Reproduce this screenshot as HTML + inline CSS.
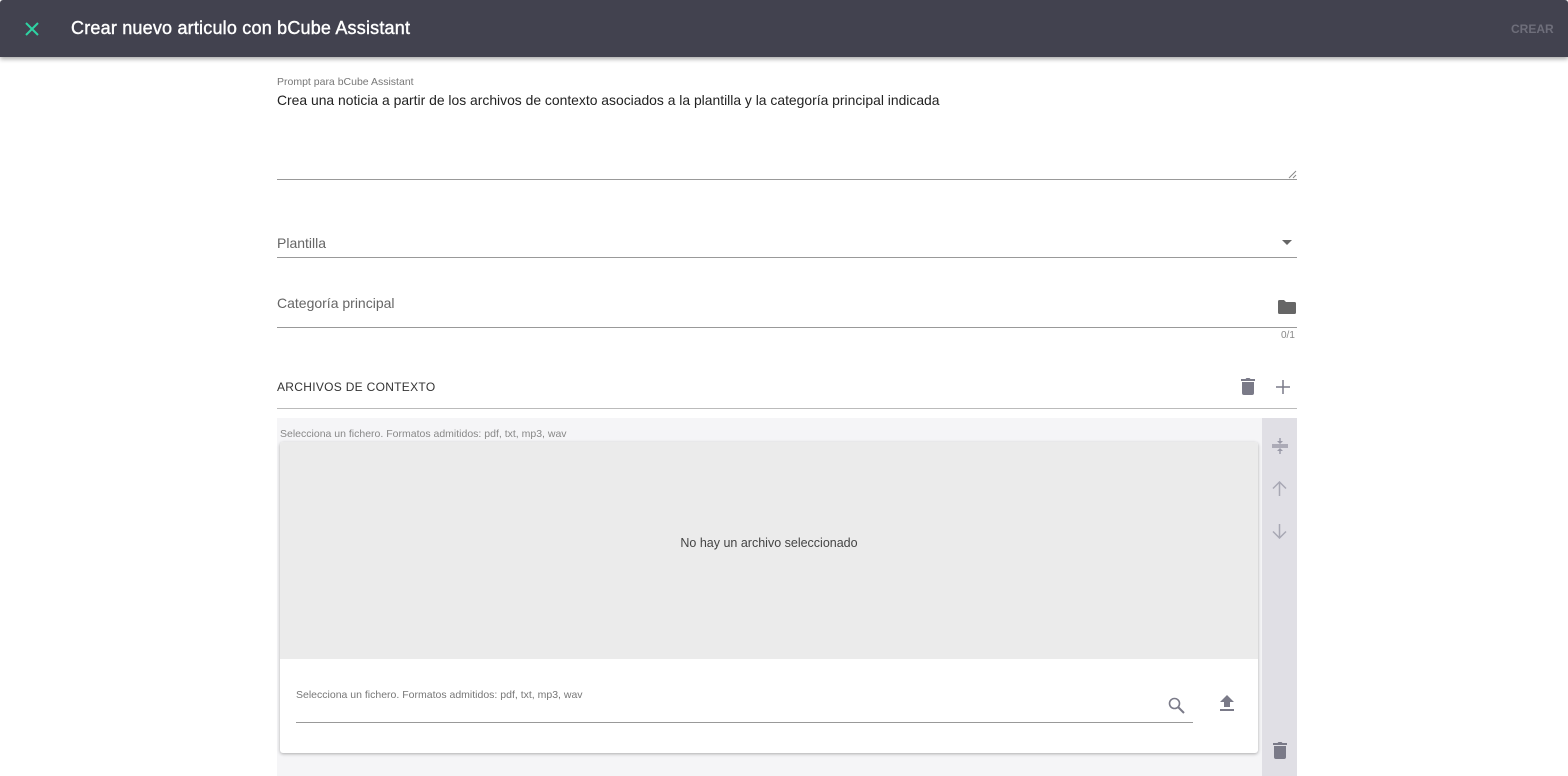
<!DOCTYPE html><html><head><style>
body{margin:0;width:1568px;height:776px;overflow:hidden;background:#fff;font-family:"Liberation Sans",sans-serif;position:relative}
.a{position:absolute}
</style></head><body>
<div class="a" style="left:0;top:0;width:1568px;height:57px;background:#42424f;box-shadow:0 2px 5px rgba(0,0,0,.35);border-radius:3px 3px 0 0"></div>
<svg class="a" style="left:25px;top:22px" width="14" height="14" viewBox="0 0 14 14"><path d="M1 1L13 13M13 1L1 13" stroke="#2ed3a3" stroke-width="2"/></svg>
<div class="a" style="left:71px;top:18px;color:#fff;font-size:18px;letter-spacing:.2px;-webkit-text-stroke:.4px #fff">Crear nuevo articulo con bCube Assistant</div>
<div class="a" style="left:1511px;top:22px;color:#6e6e7a;font-size:12px;font-weight:bold">CREAR</div>

<div class="a" style="left:277px;top:76px;font-size:10.5px;color:#777">Prompt para bCube Assistant</div>
<div class="a" style="left:277px;top:92px;font-size:13.9px;color:#222">Crea una noticia a partir de los archivos de contexto asociados a la plantilla y la categoría principal indicada</div>
<div class="a" style="left:277px;top:179px;width:1020px;height:1px;background:#999"></div>
<svg class="a" style="left:1288px;top:170px" width="9" height="9"><path d="M1 8L8 1M5 8L8 5" stroke="#888"/></svg>

<div class="a" style="left:277px;top:235px;font-size:14px;color:#666">Plantilla</div>
<svg class="a" style="left:1282px;top:240px" width="10" height="5"><path d="M0 0L10 0L5 5Z" fill="#666"/></svg>
<div class="a" style="left:277px;top:257px;width:1020px;height:1px;background:#999"></div>

<div class="a" style="left:277px;top:295px;font-size:14px;color:#666">Categoría principal</div>
<svg class="a" style="left:1278px;top:300px" width="18" height="14" viewBox="0 0 18 14"><path d="M0 1.5Q0 0 1.5 0H6L8 2H16.5Q18 2 18 3.5V12.5Q18 14 16.5 14H1.5Q0 14 0 12.5Z" fill="#666"/></svg>
<div class="a" style="left:277px;top:327px;width:1020px;height:1px;background:#999"></div>
<div class="a" style="left:1281px;top:330px;font-size:10px;color:#888">0/1</div>

<div class="a" style="left:277px;top:380px;font-size:12px;color:#333;letter-spacing:.3px">ARCHIVOS DE CONTEXTO</div>
<svg class="a" style="left:1241px;top:378px" width="14" height="17" viewBox="0 0 14 17"><path d="M1 4H13V15Q13 17 11 17H3Q1 17 1 15ZM0 1H4.5L5.5 0H8.5L9.5 1H14V3H0Z" fill="#7a7a88"/></svg>
<svg class="a" style="left:1276px;top:380px" width="14" height="14"><path d="M7 0V14M0 7H14" stroke="#7a7a88" stroke-width="1.5"/></svg>
<div class="a" style="left:277px;top:408px;width:1020px;height:1px;background:#bbb"></div>

<div class="a" style="left:277px;top:418px;width:985px;height:358px;background:#f5f5f7"></div>
<div class="a" style="left:1262px;top:418px;width:35px;height:358px;background:#e0dfe5"></div>
<div class="a" style="left:280px;top:428px;font-size:10.5px;color:#888">Selecciona un fichero. Formatos admitidos: pdf, txt, mp3, wav</div>
<div class="a" style="left:280px;top:442px;width:978px;height:311px;background:#fff;box-shadow:0 1px 3px rgba(0,0,0,.3);border-radius:3px"></div>
<div class="a" style="left:280px;top:442px;width:978px;height:217px;background:#ebebeb;border-radius:3px 3px 0 0"></div>
<div class="a" style="left:280px;top:536px;width:978px;text-align:center;font-size:12.5px;color:#444">No hay un archivo seleccionado</div>
<div class="a" style="left:296px;top:689px;font-size:10.5px;color:#777">Selecciona un fichero. Formatos admitidos: pdf, txt, mp3, wav</div>
<div class="a" style="left:296px;top:722px;width:897px;height:1px;background:#999"></div>
<svg class="a" style="left:1168px;top:697px" width="17" height="17" viewBox="0 0 17 17"><circle cx="6.5" cy="6.5" r="5" fill="none" stroke="#7a7a88" stroke-width="1.6"/><path d="M10 10L16 16" stroke="#7a7a88" stroke-width="2"/></svg>
<svg class="a" style="left:1220px;top:695px" width="14" height="16" viewBox="0 0 14 16"><path d="M7 0L14 7H10V12H4V7H0ZM0 14H14V16H0Z" fill="#7a7a88"/></svg>

<svg class="a" style="left:1272px;top:437px" width="16" height="18" viewBox="0 0 16 18"><path d="M0 8H16M0 10H16M8 1V6M8 12V17" stroke="#9a9aa8" stroke-width="1.4"/><path d="M5 4L8 7L11 4M5 14L8 11L11 14" fill="#9a9aa8"/></svg>
<svg class="a" style="left:1272px;top:481px" width="15" height="15"><path d="M7.5 1V15M1 7.5L7.5 1L14 7.5" fill="none" stroke="#a8a8b4" stroke-width="1.5"/></svg>
<svg class="a" style="left:1272px;top:524px" width="15" height="15"><path d="M7.5 0V14M1 7.5L7.5 14L14 7.5" fill="none" stroke="#a8a8b4" stroke-width="1.5"/></svg>
<svg class="a" style="left:1273px;top:742px" width="14" height="17" viewBox="0 0 14 17"><path d="M1 4H13V15Q13 17 11 17H3Q1 17 1 15ZM0 1H4.5L5.5 0H8.5L9.5 1H14V3H0Z" fill="#7a7a88"/></svg>
</body></html>
